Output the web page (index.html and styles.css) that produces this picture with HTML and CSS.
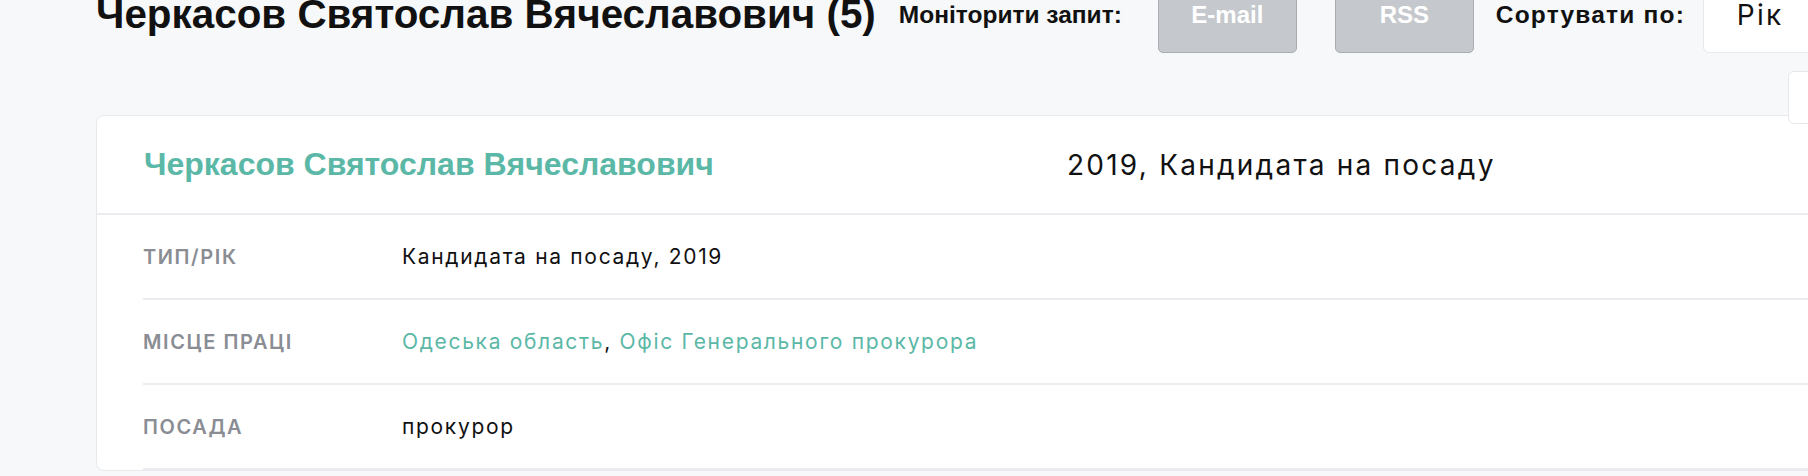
FILE: index.html
```html
<!DOCTYPE html>
<html lang="uk">
<head>
  <meta charset="UTF-8" />
  <meta name="viewport" content="width=device-width, initial-scale=1.0" />
  <title>Черкасов Святослав Вячеславович</title>
  <link rel="stylesheet" href="styles.css">
</head>
<body>
  <div class="page">
    <div class="topbar">
      <h1 class="title">Черкасов Святослав Вячеславович (5)</h1>
      <span class="bar-label monitor-label">Моніторити запит:</span>
      <a class="btn btn-email" href="#">E-mail</a>
      <a class="btn btn-rss" href="#">RSS</a>
      <span class="bar-label sort-label">Сортувати по:</span>
      <div class="sort-select">Рік</div>
    </div>

    <div class="side-box"></div>

    <div class="card">
      <div class="card-head">
        <a class="person" href="#">Черкасов Святослав Вячеславович</a>
        <span class="head-info">2019, Кандидата на посаду</span>
      </div>
      <div class="field">
        <div class="field-label">Тип/рік</div>
        <div class="field-value">Кандидата на посаду, 2019</div>
      </div>
      <div class="field">
        <div class="field-label">Місце праці</div>
        <div class="field-value"><a href="#">Одеська область</a>, <a href="#">Офіс Генерального прокурора</a></div>
      </div>
      <div class="field">
        <div class="field-label">Посада</div>
        <div class="field-value">прокурор</div>
      </div>
    </div>
  </div>
</body>
</html>
```

FILE: styles.css
```css
body {
  margin: 0;
  background: #f7f8fa;
  font-family: Inter, "Noto Sans", sans-serif;
  color: #111;
}
.page {
  position: relative;
  height: 100vh;
  padding-left: 96px;
  overflow: hidden;
}
.topbar {
  display: flex;
  align-items: flex-start;
  height: 73px;
  margin-top: -20px;
  white-space: nowrap;
}
.topbar > * {
  flex-shrink: 0;
}
.title {
  margin: 10px 23px 0 0;
  font-family: "Liberation Sans", Arial, sans-serif;
  font-size: 40.4px;
  line-height: 48px;
  font-weight: bold;
  color: #111;
}
.bar-label {
  margin-top: 21px;
  font-family: "Liberation Sans", Arial, sans-serif;
  font-size: 24.5px;
  line-height: 28px;
  font-weight: bold;
  color: #111;
}
.monitor-label {
  width: 223px;
  margin-right: 36px;
}
.sort-label {
  width: 187px;
  margin-right: 20px;
  letter-spacing: 1.2px;
}
.btn {
  display: block;
  box-sizing: border-box;
  width: 139px;
  height: 68px;
  margin-top: 5px;
  padding-top: 15px;
  border: 1px solid #aaadb2;
  border-radius: 5px;
  background: #c5c8cc;
  color: #fff;
  font-family: "Liberation Sans", Arial, sans-serif;
  font-size: 24px;
  line-height: 28px;
  font-weight: bold;
  text-align: center;
  text-decoration: none;
}
.btn-email {
  margin-right: 38px;
}
.btn-rss {
  margin-right: 22px;
}
.sort-select {
  box-sizing: border-box;
  width: 200px;
  height: 73px;
  padding: 17px 0 0 33px;
  background: #fff;
  border: 1px solid #e8e9ed;
  border-radius: 6px;
  font-size: 28px;
  line-height: 34px;
  letter-spacing: 0.08em;
}
.side-box {
  position: absolute;
  left: 1788px;
  top: 71px;
  width: 60px;
  height: 51px;
  background: #fff;
  border: 1px solid #e6e7eb;
  border-radius: 6px;
}
.card {
  width: 1800px;
  margin-top: 62px;
  background: #fff;
  border: 1px solid #e8e9ed;
  border-radius: 8px;
}
.card-head {
  display: grid;
  grid-template-columns: 923px auto;
  align-items: center;
  height: 97px;
  padding-left: 47px;
  border-bottom: 2px solid #ececf0;
}
.person {
  font-family: "Liberation Sans", Arial, sans-serif;
  font-size: 32px;
  font-weight: bold;
  color: #5bb8a7;
  text-decoration: none;
}
.head-info {
  font-size: 28px;
  letter-spacing: 0.08em;
}
.field {
  display: grid;
  grid-template-columns: 259px auto;
  align-items: center;
  height: 83px;
  margin-left: 46px;
  border-bottom: 2px solid #ececf0;
}
.field-label {
  font-size: 20px;
  font-weight: 600;
  letter-spacing: 0.08em;
  text-transform: uppercase;
  color: #8a8d93;
}
.field-value {
  font-size: 21px;
  letter-spacing: 0.08em;
}
.field-value a {
  color: #5bb8a7;
  text-decoration: none;
}
```
